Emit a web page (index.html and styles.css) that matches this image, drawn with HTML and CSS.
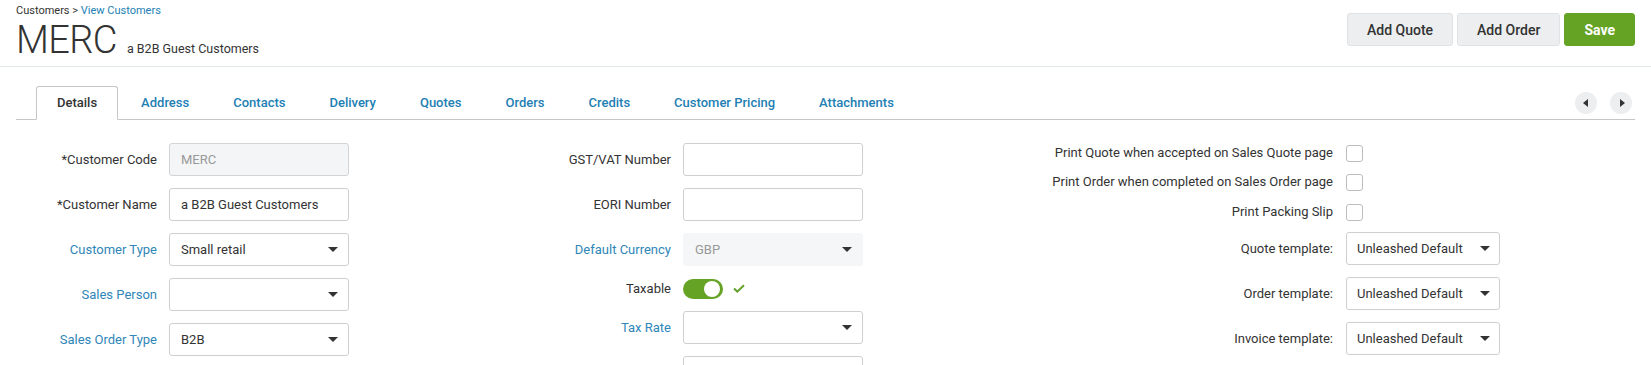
FILE: index.html
```html
<!DOCTYPE html>
<html lang="en">
<head>
<meta charset="utf-8">
<title>MERC - Customer</title>
<link rel="stylesheet" href="styles.css">
</head>
<body>
<header class="page-header">
  <div class="title-block">
    <div class="breadcrumb"><span class="crumb">Customers</span> &gt; <a class="crumb-link">View Customers</a></div>
    <div class="title-row">
      <h1 class="title">MERC</h1>
      <span class="subtitle">a B2B Guest Customers</span>
    </div>
  </div>
  <div class="actions">
    <button class="btn">Add Quote</button>
    <button class="btn">Add Order</button>
    <button class="btn btn-primary">Save</button>
  </div>
</header>

<nav class="tabs">
  <div class="tab active">Details</div>
  <div class="tab">Address</div>
  <div class="tab">Contacts</div>
  <div class="tab">Delivery</div>
  <div class="tab">Quotes</div>
  <div class="tab">Orders</div>
  <div class="tab">Credits</div>
  <div class="tab">Customer Pricing</div>
  <div class="tab">Attachments</div>
  <div class="tab-scroll">
    <span class="scroll-btn"><span class="tri tri-left"></span></span>
    <span class="scroll-btn"><span class="tri tri-right"></span></span>
  </div>
</nav>

<main class="form">
  <section class="col col-1">
    <label class="label">*Customer Code</label>
    <input class="input input-disabled" value="MERC" disabled>
    <label class="label">*Customer Name</label>
    <input class="input" value="a B2B Guest Customers">
    <label class="label link">Customer Type</label>
    <div class="select"><span>Small retail</span><span class="caret"></span></div>
    <label class="label link">Sales Person</label>
    <div class="select"><span></span><span class="caret"></span></div>
    <label class="label link">Sales Order Type</label>
    <div class="select"><span>B2B</span><span class="caret"></span></div>
  </section>

  <section class="col col-2">
    <label class="label">GST/VAT Number</label>
    <input class="input" value="">
    <label class="label">EORI Number</label>
    <input class="input" value="">
    <label class="label link">Default Currency</label>
    <div class="select select-disabled"><span>GBP</span><span class="caret"></span></div>
    <label class="label toggle-label">Taxable</label>
    <div class="toggle-cell">
      <span class="switch"><span class="knob"></span></span>
      <svg class="check" width="12" height="9" viewBox="0 0 12 9"><path d="M1 4.5 L4.3 7.6 L11 1.2" fill="none" stroke="#62a12a" stroke-width="2"/></svg>
    </div>
    <label class="label link">Tax Rate</label>
    <div class="select"><span></span><span class="caret"></span></div>
    <label class="label"></label>
    <input class="input" value="">
  </section>

  <section class="col-3">
    <div class="row row-cb">
      <label class="label">Print Quote when accepted on Sales Quote page</label>
      <span class="checkbox"></span>
    </div>
    <div class="row row-cb">
      <label class="label">Print Order when completed on Sales Order page</label>
      <span class="checkbox"></span>
    </div>
    <div class="row row-cb">
      <label class="label">Print Packing Slip</label>
      <span class="checkbox"></span>
    </div>
    <div class="row row-field first-field">
      <label class="label">Quote template:</label>
      <div class="select select-sm"><span>Unleashed Default</span><span class="caret"></span></div>
    </div>
    <div class="row row-field">
      <label class="label">Order template:</label>
      <div class="select select-sm"><span>Unleashed Default</span><span class="caret"></span></div>
    </div>
    <div class="row row-field">
      <label class="label">Invoice template:</label>
      <div class="select select-sm"><span>Unleashed Default</span><span class="caret"></span></div>
    </div>
  </section>
</main>
</body>
</html>
```

FILE: styles.css
```css
* { box-sizing: border-box; }

html, body {
  margin: 0;
  padding: 0;
  background: #fff;
  font-family: Roboto, "Liberation Sans", Arial, sans-serif;
  color: #333;
}

body {
  height: 365px;
  overflow: hidden;
}

.page-header {
  display: flex;
  justify-content: space-between;
  align-items: flex-start;
  padding: 4px 16px 4px 16px;
  border-bottom: 1px solid #e3e8e8;
}

.breadcrumb {
  font-size: 11px;
  line-height: 14px;
  color: #333;
}

.crumb-link { color: #2280b4; }

.title-row {
  display: flex;
  align-items: baseline;
  height: 44px;
}

.title {
  margin: 0;
  font-size: 38px;
  line-height: 44px;
  font-weight: 300;
  color: #333;
  letter-spacing: -0.6px;
}

.subtitle {
  margin-left: 10px;
  font-size: 12.5px;
  color: #333;
}

.actions {
  display: flex;
  gap: 4px;
  margin-top: 9px;
}

.btn {
  height: 33px;
  padding: 0 19px;
  border: 1px solid #e0e3e6;
  border-radius: 3px;
  background: #eceef0;
  font-family: inherit;
  font-size: 14px;
  font-weight: 500;
  color: #333;
  white-space: nowrap;
}

.btn-primary {
  background: #65a325;
  border-color: #65a325;
  color: #fff;
  font-weight: 700;
}

.tabs {
  display: flex;
  align-items: flex-end;
  margin: 19px 16px 0 16px;
  padding-left: 20px;
  height: 34px;
  border-bottom: 1px solid #c6c6c6;
}

.tab {
  height: 33px;
  line-height: 33px;
  padding: 0 22px;
  font-size: 13px;
  font-weight: 500;
  color: #2280b4;
  white-space: nowrap;
}

.tab:nth-child(2) { padding-left: 23px; }

.tab.active {
  height: 34px;
  line-height: 32px;
  margin-bottom: -1px;
  padding: 0 20px 0 20px;
  border: 1px solid #c6c6c6;
  border-bottom-color: #fff;
  border-radius: 3px 3px 0 0;
  background: #fff;
  color: #333;
}

.tab-scroll {
  display: flex;
  gap: 13px;
  margin-left: auto;
  margin-right: 3px;
  align-self: center;
}

.scroll-btn {
  width: 22px;
  height: 22px;
  border-radius: 50%;
  background: #eceef0;
  display: flex;
  align-items: center;
  justify-content: center;
}

.tri {
  width: 0;
  height: 0;
  border-top: 4px solid transparent;
  border-bottom: 4px solid transparent;
}
.tri-left { border-right: 5px solid #333; margin-right: 2px; }
.tri-right { border-left: 5px solid #333; margin-left: 2px; }

.form {
  display: flex;
  gap: 30px;
  padding: 23px 16px 0 16px;
}

.col {
  display: grid;
  column-gap: 12px;
  row-gap: 12px;
  align-items: center;
  grid-auto-rows: 33px;
}

.col-1 { grid-template-columns: 141px 180px; }
.col-2 {
  grid-template-columns: 292px 180px;
  grid-template-rows: 33px 33px 33px 21px 33px 33px;
}

.col-3 {
  display: flex;
  flex-direction: column;
}

.row {
  display: grid;
  grid-template-columns: 440px 154px;
  column-gap: 13px;
  align-items: center;
}

.row-cb { height: 21px; }
.row-cb .label { padding-bottom: 2px; }
.row-cb + .row-cb { margin-top: 8px; }
.row-cb + .row-cb + .row-cb { margin-top: 9px; }
.row-field { height: 33px; margin-top: 12px; }
.row-field.first-field { margin-top: 9px; }

.label {
  font-size: 13px;
  text-align: right;
  color: #333;
  white-space: nowrap;
}
.label.link { color: #2f86b8; }

.input {
  height: 33px;
  width: 180px;
  padding: 0 11px;
  border: 1px solid #cfcfcf;
  border-radius: 3px;
  font-family: inherit;
  font-size: 13px;
  color: #333;
  background: #fff;
  outline: none;
}

.input-disabled {
  background: #f4f5f6;
  border-color: #d4d4d4;
  color: #999;
  -webkit-text-fill-color: #999;
}

.select {
  height: 33px;
  display: flex;
  align-items: center;
  justify-content: space-between;
  padding: 0 10px 0 11px;
  border: 1px solid #cfcfcf;
  border-radius: 3px;
  font-size: 13px;
  color: #333;
  background: #fff;
}

.select-disabled {
  background: #f5f6f7;
  border-color: #f5f6f7;
  color: #999;
}

.select-sm { padding-left: 10px; padding-right: 9px; }

.caret {
  width: 0;
  height: 0;
  border-left: 5px solid transparent;
  border-right: 5px solid transparent;
  border-top: 5px solid #333;
}

.toggle-cell {
  display: flex;
  align-items: center;
  gap: 10px;
  height: 21px;
}

.switch {
  width: 40px;
  height: 20px;
  border-radius: 10px;
  background: #65a325;
  display: flex;
  align-items: center;
  justify-content: flex-end;
  padding-right: 3px;
}

.knob {
  width: 16px;
  height: 16px;
  border-radius: 50%;
  background: #fff;
}

.check { display: block; }

.checkbox {
  width: 17px;
  height: 17px;
  border: 1px solid #bdbdbd;
  border-radius: 3px;
  background: #fff;
}
```
